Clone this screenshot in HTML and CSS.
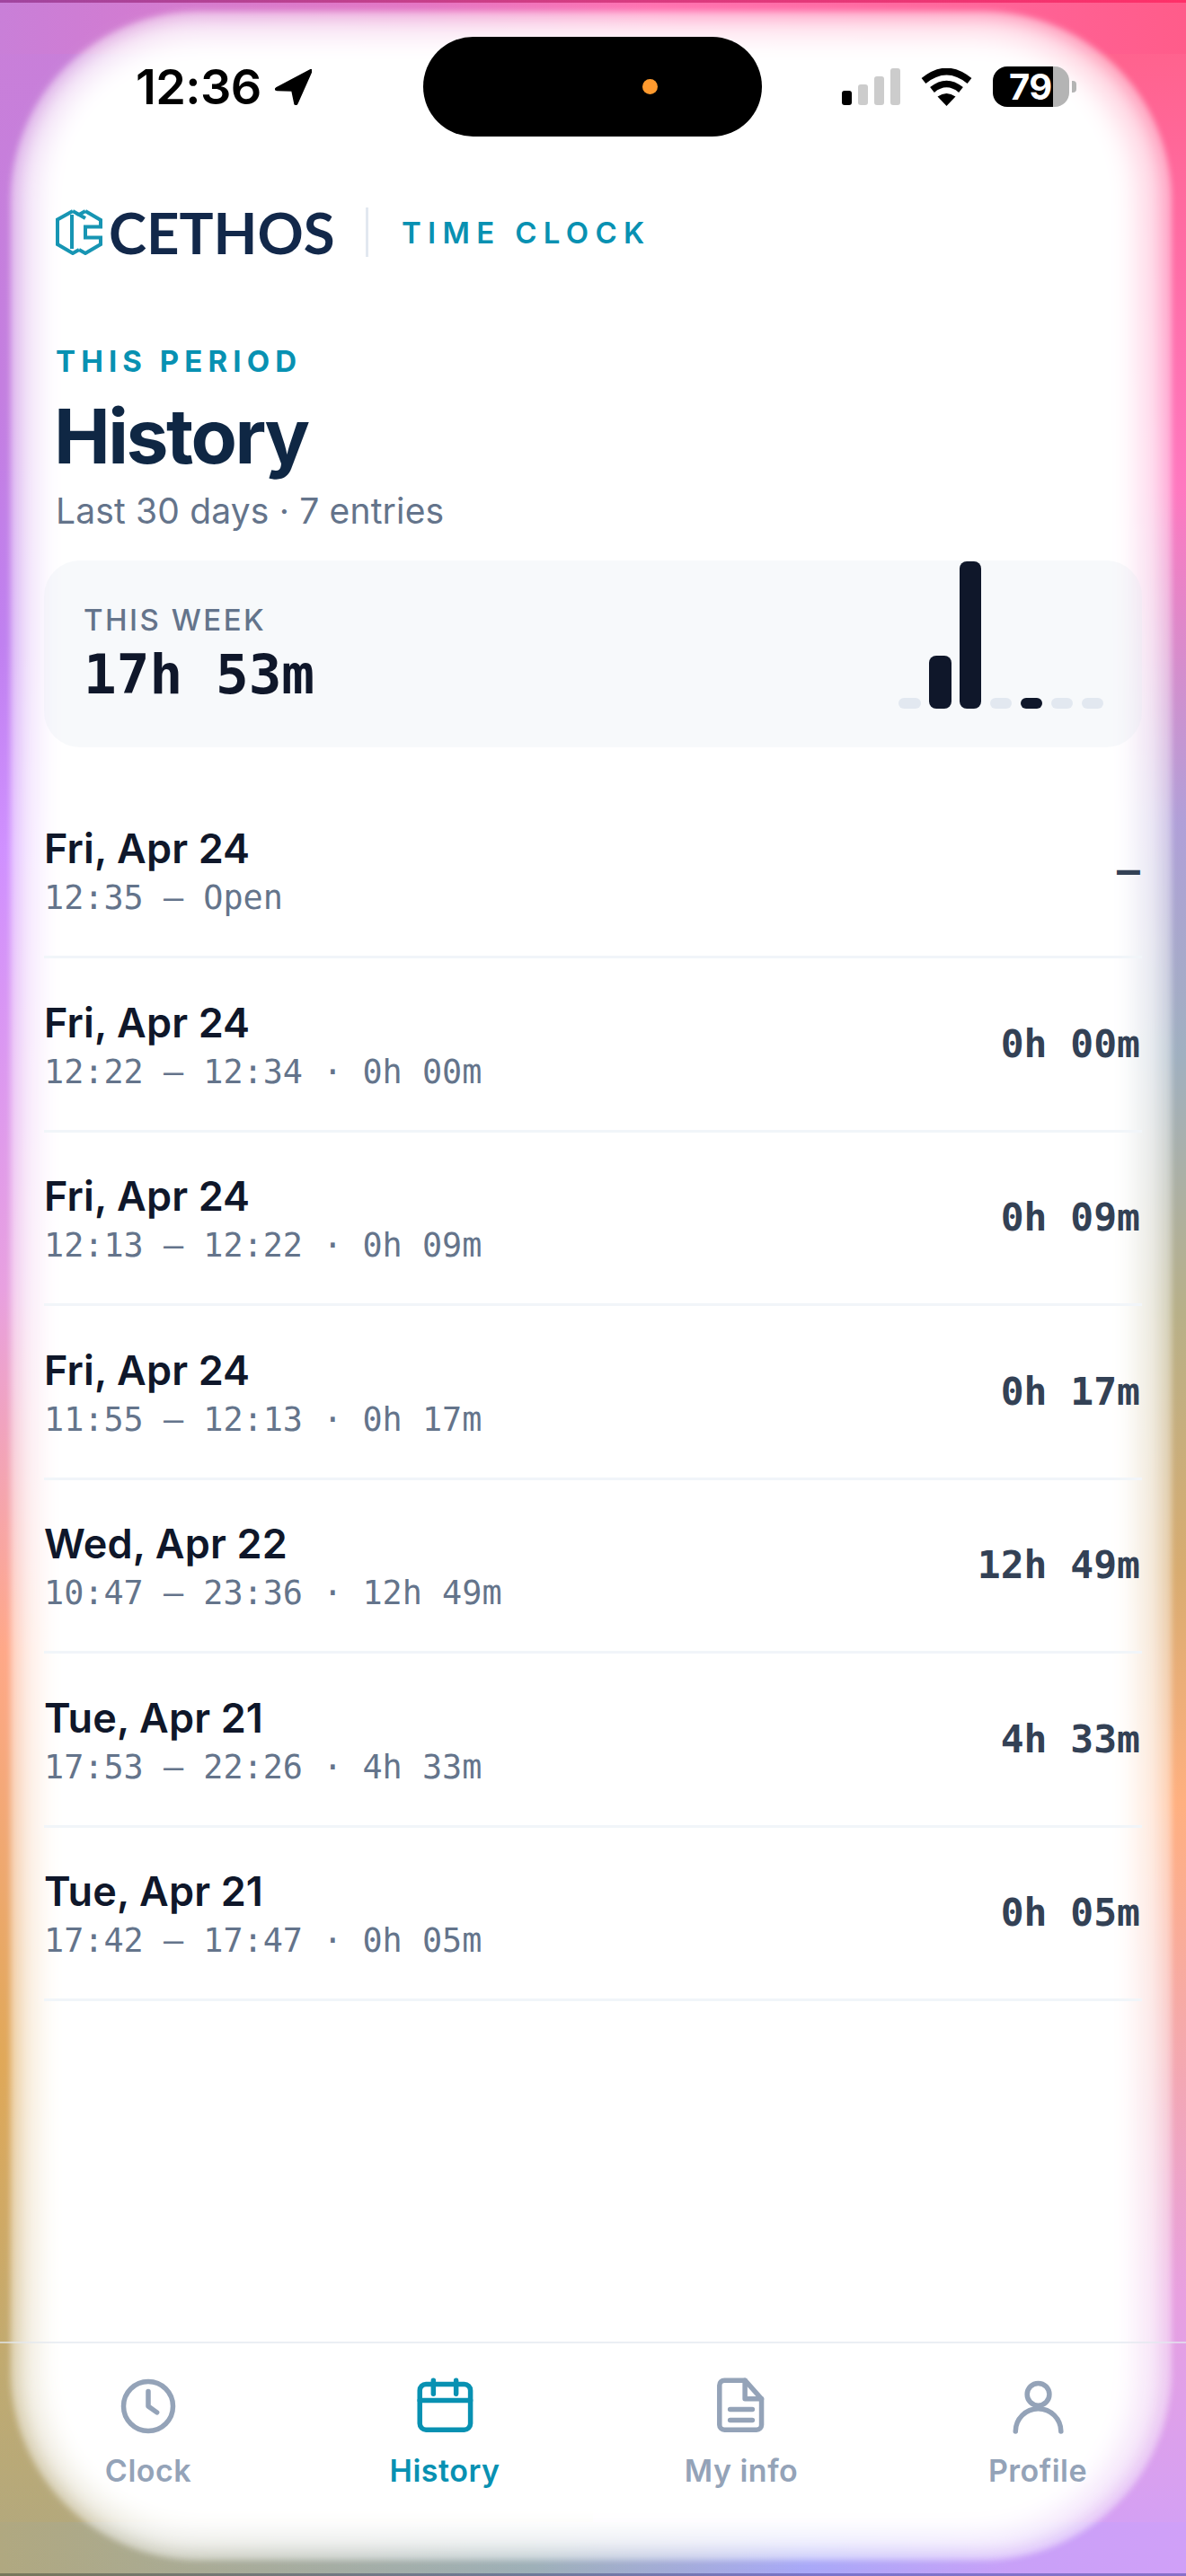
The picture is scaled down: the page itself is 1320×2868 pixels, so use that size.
FILE: index.html

```html
<!DOCTYPE html>
<html lang="en">
<head>
    <meta charset="UTF-8">
    <meta name="viewport" content="width=device-width, initial-scale=1.0">
    <title>Cethos Time Clock - History</title>
    <link rel="stylesheet" href="styles.css">
</head>
<body>
    <div class="page">
        <!-- Wallpaper glow behind the app -->
        <div class="glow glow-outer"></div>
        <div class="glow glow-middle"></div>
        <div class="glow glow-inner"></div>

        <div class="status-bar">
            <div class="status-left">
                <span class="status-time">12:36</span>
                <svg class="status-arrow" viewBox="0 0 41 40"><path d="M40 0.5 L1.5 21 Q-1 23 2.5 23.5 L19 24 L22 38.5 Q23.5 41 25 38 L41 2 Q41.5 0 40 0.5 Z"/></svg>
            </div>
            <div class="island"><span class="island-dot"></span></div>
            <div class="status-right">
                <div class="signal">
                    <span class="signal-bar on h1"></span>
                    <span class="signal-bar h2"></span>
                    <span class="signal-bar h3"></span>
                    <span class="signal-bar h4"></span>
                </div>
                <svg class="wifi" viewBox="0 0 57 42">
                    <path class="wifi-arc" d="M3 14 Q28.5 -7 54 14"/>
                    <path class="wifi-arc" d="M12.5 24 Q28.5 11 44.5 24"/>
                    <path d="M28.5 42 L18.5 31.5 Q28.5 24.5 38.5 31.5 Z"/>
                </svg>
                <div class="battery">79</div>
                <span class="battery-nub"></span>
            </div>
        </div>

        <header class="brand">
            <svg class="brand-icon" viewBox="0 0 52 51">
                <path d="M19 2 L2 11.5 V39 L19 49 L26 45"/>
                <path d="M26 6 L19 2 M18 6 V44"/>
                <path d="M33 2 L50 12 V19.5 H33 V31.5 H50 V39 L33 49 L26 45"/>
                <path d="M33 2 L26 6 L33 10"/>
            </svg>
            <span class="brand-name">CETHOS</span>
            <span class="brand-divider"></span>
            <span class="brand-app">TIME CLOCK</span>
        </header>

        <section class="heading">
            <p class="eyebrow">THIS PERIOD</p>
            <h1>History</h1>
            <p class="subtitle">Last 30 days · 7 entries</p>
        </section>

        <section class="week-card">
            <div class="week-text">
                <div class="week-label">THIS WEEK</div>
                <div class="week-value">17h 53m</div>
            </div>
            <div class="week-bars">
                <span class="bar" style="height: 12px"></span>
                <span class="bar on" style="height: 59px"></span>
                <span class="bar on" style="height: 164px"></span>
                <span class="bar" style="height: 12px"></span>
                <span class="bar on" style="height: 12px"></span>
                <span class="bar" style="height: 12px"></span>
                <span class="bar" style="height: 12px"></span>
            </div>
        </section>

        <ul class="entries">
            <li class="entry">
                <div>
                    <div class="entry-date">Fri, Apr 24</div>
                    <div class="entry-time">12:35 — Open</div>
                </div>
                <div class="entry-total">—</div>
            </li>
            <li class="entry">
                <div>
                    <div class="entry-date">Fri, Apr 24</div>
                    <div class="entry-time">12:22 — 12:34 · 0h 00m</div>
                </div>
                <div class="entry-total">0h 00m</div>
            </li>
            <li class="entry">
                <div>
                    <div class="entry-date">Fri, Apr 24</div>
                    <div class="entry-time">12:13 — 12:22 · 0h 09m</div>
                </div>
                <div class="entry-total">0h 09m</div>
            </li>
            <li class="entry">
                <div>
                    <div class="entry-date">Fri, Apr 24</div>
                    <div class="entry-time">11:55 — 12:13 · 0h 17m</div>
                </div>
                <div class="entry-total">0h 17m</div>
            </li>
            <li class="entry">
                <div>
                    <div class="entry-date">Wed, Apr 22</div>
                    <div class="entry-time">10:47 — 23:36 · 12h 49m</div>
                </div>
                <div class="entry-total">12h 49m</div>
            </li>
            <li class="entry">
                <div>
                    <div class="entry-date">Tue, Apr 21</div>
                    <div class="entry-time">17:53 — 22:26 · 4h 33m</div>
                </div>
                <div class="entry-total">4h 33m</div>
            </li>
            <li class="entry">
                <div>
                    <div class="entry-date">Tue, Apr 21</div>
                    <div class="entry-time">17:42 — 17:47 · 0h 05m</div>
                </div>
                <div class="entry-total">0h 05m</div>
            </li>
        </ul>

        <nav class="tabs">
            <a class="tab">
                <svg class="tab-icon" viewBox="0 0 24 24"><circle cx="12" cy="12" r="10"/><path d="M12 6v6l3.5 2.5"/></svg>
                <span>Clock</span>
            </a>
            <a class="tab active">
                <svg class="tab-icon" viewBox="0 0 24 24"><rect x="1.9" y="3.1" width="20.5" height="18.4" rx="2.5"/><path d="M1.9 9.6h20.5M7.4 1.5V7M16.6 1.5V7"/></svg>
                <span>History</span>
            </a>
            <a class="tab">
                <svg class="tab-icon" viewBox="0 0 24 24"><path d="M13.5 1.5H5.2a2 2 0 0 0-2 2v16a2 2 0 0 0 2 2h13a2 2 0 0 0 2-2V9z"/><path d="M13.5 1.5V9h6.7M7.5 13.3h9M7.5 17.6h9"/></svg>
                <span>My info</span>
            </a>
            <a class="tab">
                <svg class="tab-icon" viewBox="0 0 24 24"><circle cx="12.2" cy="7.2" r="4.5"/><path d="M3 22.2a9.2 9.2 0 0 1 18.4 0"/></svg>
                <span>Profile</span>
            </a>
        </nav>
    </div>
</body>
</html>
```

FILE: styles.css

```css
* {
    margin: 0;
    padding: 0;
    box-sizing: border-box;
}

body {
    font-family: 'Inter', 'Liberation Sans', sans-serif;
    width: 1320px;
    height: 2868px;
    overflow: hidden;
}

.page {
    position: relative;
    width: 1320px;
    height: 2868px;
    display: flex;
    flex-direction: column;
    overflow: hidden;
    background-color: #fff;
    background-image:
        linear-gradient(90deg, #a0459f 0%, #d03c84 45%, #ff3068 100%),
        linear-gradient(90deg, #77775a 0%, #6e7a99 45%, #7b74cc 70%, #8870c8 100%),
        linear-gradient(90deg, #c97fd8 0%, #e474c4 35%, #ff70b0 55%, #ff5c8a 100%),
        linear-gradient(90deg, #b0a880 0%, #9db0b8 45%, #a8a8f8 68%, #c8a0f8 85%, #d0a0f8 100%),
        linear-gradient(180deg, #c97fd8 0%, #c47ee0 15%, #c080f0 25%, #d090ff 33%, #e8a0e0 50%, #ffa888 64%, #e0a858 80%, #c0aa70 92%, #b0a880 100%),
        linear-gradient(180deg, #ff6088 0%, #ff78c0 19%, #b0a0d8 32%, #a0b0c0 41%, #b8b088 51%, #d8ac70 61%, #ffb080 70%, #f4a8b0 80%, #e8a0e0 89%, #d0a0f8 100%);
    background-size: 100% 3px, 100% 3px, 100% 60px, 100% 60px, 50% 100%, 50% 100%;
    background-position: 0 0, 0 100%, 0 0, 0 100%, 0 0, 100% 0;
    background-repeat: no-repeat;
}

.glow {
    position: absolute;
    background: #fff;
}

.glow-outer {
    top: 13px;
    left: 12px;
    right: 16px;
    bottom: 18px;
    border-radius: 210px;
    opacity: 0.4;
    filter: blur(3px);
}

.glow-middle {
    top: 22px;
    left: 22px;
    right: 28px;
    bottom: 28px;
    border-radius: 200px;
    opacity: 0.5;
    filter: blur(8px);
}

.glow-inner {
    top: 36px;
    left: 38px;
    right: 52px;
    bottom: 42px;
    border-radius: 185px;
    filter: blur(16px);
}

/* Status bar */
.status-bar {
    position: relative;
    display: flex;
    align-items: center;
    height: 111px;
    margin-top: 41px;
    flex-shrink: 0;
}

.status-left {
    display: flex;
    align-items: center;
    gap: 15px;
    width: 320px;
    margin-left: 151px;
}

.status-time {
    font-size: 54px;
    font-weight: 600;
    line-height: 60px;
    letter-spacing: -0.6px;
    color: #000;
}

.status-arrow {
    width: 41px;
    height: 40px;
    fill: #000;
    stroke: #000;
    stroke-width: 1.5;
    stroke-linejoin: round;
}

.island {
    display: flex;
    align-items: center;
    width: 377px;
    height: 111px;
    padding-left: 244px;
    border-radius: 56px;
    background: #000;
}

.island-dot {
    width: 17px;
    height: 17px;
    border-radius: 50%;
    background: #ff9a2e;
}

.status-right {
    display: flex;
    align-items: center;
    margin-left: 89px;
}

.signal {
    display: flex;
    align-items: flex-end;
    gap: 7px;
    height: 41px;
    margin-right: 23px;
}

.signal-bar {
    width: 11px;
    border-radius: 3px;
    background: #ccc;
}

.signal-bar.on {
    background: #000;
}

.signal-bar.h1 { height: 16px; }
.signal-bar.h2 { height: 23px; }
.signal-bar.h3 { height: 32px; }
.signal-bar.h4 { height: 41px; }

.wifi {
    width: 57px;
    height: 42px;
    margin-right: 23px;
    fill: #000;
}

.wifi-arc {
    fill: none;
    stroke: #000;
    stroke-width: 7.5;
}

.battery {
    width: 85px;
    height: 45px;
    padding-left: 18px;
    border-radius: 16px;
    background: linear-gradient(90deg, #000 67px, #b4b4b4 67px);
    color: #fff;
    font-size: 40px;
    font-weight: 700;
    line-height: 45px;
    letter-spacing: -0.5px;
}

.battery-nub {
    width: 5px;
    height: 13px;
    margin-left: 3px;
    border-radius: 0 4px 4px 0;
    background: #b4b4b4;
}

/* Brand row */
.brand {
    position: relative;
    display: flex;
    align-items: center;
    height: 55px;
    margin: 79px 0 0 62px;
    flex-shrink: 0;
}

.brand-icon {
    width: 52px;
    height: 51px;
    margin-right: 7px;
    fill: none;
    stroke: #1795b3;
    stroke-width: 4;
}

.brand-name {
    width: 248px;
    font-family: 'Lato', 'Liberation Sans', sans-serif;
    font-size: 63.5px;
    font-weight: 700;
    line-height: 55px;
    color: #12284a;
}

.brand-divider {
    width: 3px;
    height: 55px;
    margin: 0 37px 0 38px;
    background: #e2e8f0;
}

.brand-app {
    font-size: 33px;
    font-weight: 600;
    line-height: 40px;
    letter-spacing: 7.3px;
    color: #0891b2;
}

/* Page heading */
.heading {
    position: relative;
    margin: 96px 0 0 62px;
    flex-shrink: 0;
}

.eyebrow {
    font-size: 33px;
    font-weight: 700;
    line-height: 40px;
    letter-spacing: 6.1px;
    color: #0891b2;
}

h1 {
    margin: 18px 0 0 -2px;
    font-size: 84px;
    font-weight: 700;
    line-height: 92px;
    letter-spacing: -2.5px;
    color: #0f2744;
}

.subtitle {
    margin-top: 13px;
    font-size: 39px;
    line-height: 48px;
    letter-spacing: 0.16px;
    color: #64748b;
}

/* This week card */
.week-card {
    position: relative;
    display: flex;
    justify-content: space-between;
    align-items: flex-end;
    height: 208px;
    margin: 31px 49px 0;
    padding: 0 43px 43px 44px;
    border-radius: 40px;
    background: rgba(226, 232, 240, 0.28);
    flex-shrink: 0;
}

.week-text {
    margin-bottom: 2px;
}

.week-label {
    font-size: 33px;
    font-weight: 500;
    line-height: 40px;
    letter-spacing: 2.5px;
    color: #64748b;
}

.week-value {
    margin-top: 5px;
    font-family: 'DejaVu Sans Mono', monospace;
    font-size: 61px;
    font-weight: 700;
    line-height: 72px;
    color: #0f172a;
}

.week-bars {
    display: flex;
    align-items: flex-end;
    gap: 9.6px;
}

.bar {
    width: 24.3px;
    border-radius: 8px;
    background: #e2e8f0;
}

.bar.on {
    background: #0f172a;
}

/* Entries */
.entries {
    position: relative;
    margin: 41.5px 49px 0;
    list-style: none;
    flex-shrink: 0;
}

.entry {
    display: flex;
    justify-content: space-between;
    align-items: center;
    height: 193.5px;
    padding: 3px 2px 0 0;
    border-bottom: 3px solid #f1f5f9;
}

.entry-date {
    font-size: 45px;
    font-weight: 600;
    line-height: 54px;
    letter-spacing: 0.15px;
    color: #0f172a;
}

.entry-time {
    margin-top: 6px;
    font-family: 'DejaVu Sans Mono', monospace;
    font-size: 36.8px;
    line-height: 44px;
    color: #64748b;
}

.entry-total {
    padding-bottom: 4px;
    font-family: 'DejaVu Sans Mono', monospace;
    font-size: 43px;
    font-weight: 700;
    line-height: 50px;
    color: #334155;
}

/* Bottom tabs */
.tabs {
    position: relative;
    display: grid;
    grid-template-columns: repeat(4, 1fr);
    margin-top: auto;
    height: 261px;
    padding-top: 37px;
    border-top: 2px solid rgba(226, 232, 240, 0.7);
}

.tab {
    display: flex;
    flex-direction: column;
    align-items: center;
    gap: 19px;
    font-size: 34px;
    font-weight: 600;
    line-height: 40px;
    letter-spacing: 0.5px;
    color: #94a3b8;
}

.tab.active {
    color: #0891b2;
}

.tab-icon {
    width: 66px;
    height: 66px;
    fill: none;
    stroke: currentColor;
    stroke-width: 2;
    stroke-linecap: round;
    stroke-linejoin: round;
}
```
